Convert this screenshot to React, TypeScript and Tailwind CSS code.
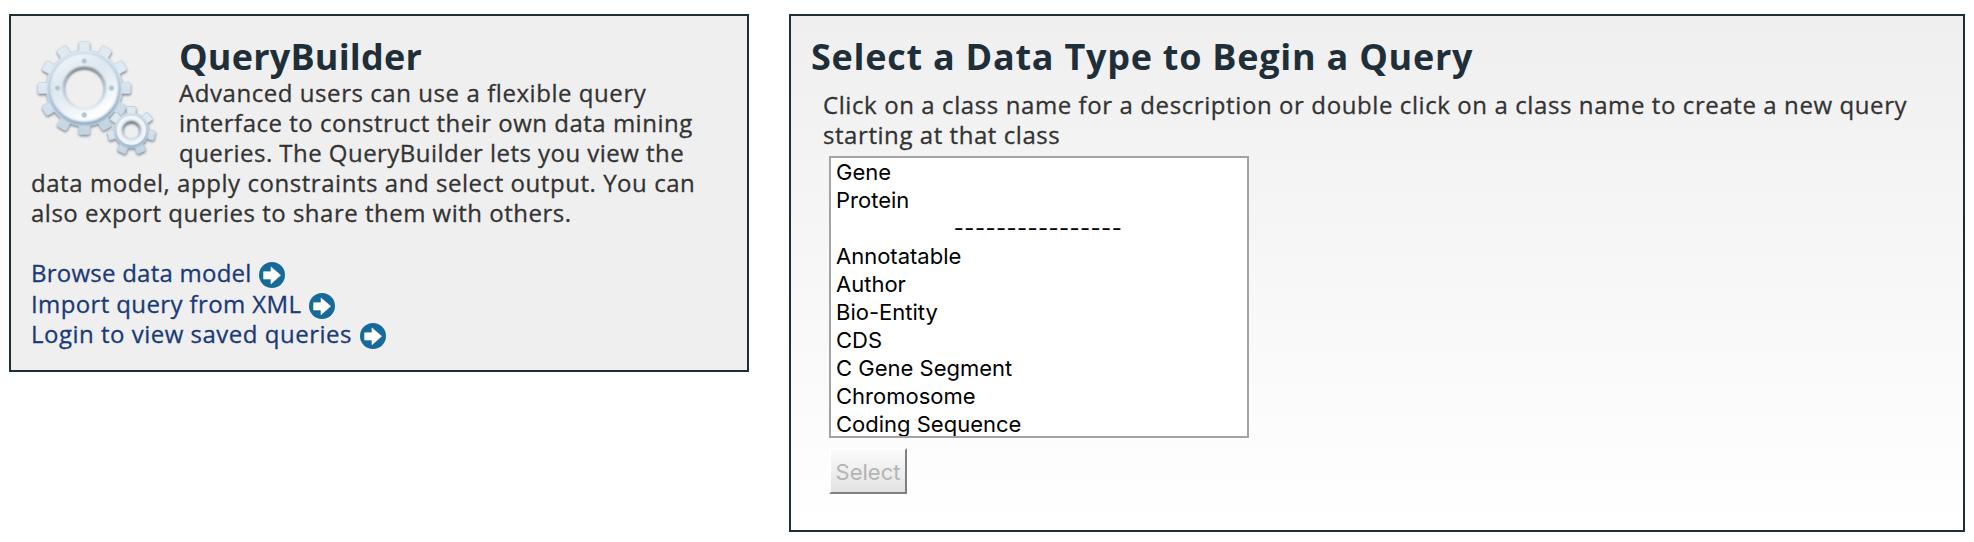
import React from "react";

function gearPath(cx: number, cy: number, teeth: number, outer: number, root: number, hole: number, start = -90) {
  const step = 360 / teeth;
  const pt = (r: number, deg: number) => {
    const a = (deg * Math.PI) / 180;
    return `${(cx + r * Math.cos(a)).toFixed(2)} ${(cy + r * Math.sin(a)).toFixed(2)}`;
  };
  let d = "";
  for (let i = 0; i < teeth; i++) {
    const c = start + i * step;
    d += `${i === 0 ? "M" : "L"}${pt(root, c - step * 0.27)} L${pt(outer - 1, c - step * 0.23)} L${pt(outer, c - step * 0.17)} L${pt(outer, c + step * 0.17)} L${pt(outer - 1, c + step * 0.23)} L${pt(root, c + step * 0.27)} A${root} ${root} 0 0 1 ${pt(root, c + step * 0.73)} `;
  }
  d += `Z M${cx + hole} ${cy} A${hole} ${hole} 0 1 0 ${cx - hole} ${cy} A${hole} ${hole} 0 1 0 ${cx + hole} ${cy} Z`;
  return d;
}

function Gears() {
  return (
    <svg className="block h-[130px] w-[140px]" viewBox="0 0 140 130" aria-hidden="true">
      <defs>
        <linearGradient id="metal" x1="0" y1="0" x2="0.15" y2="1">
          <stop offset="0" stopColor="#dfe9f0" />
          <stop offset="0.45" stopColor="#dfeaf3" />
          <stop offset="1" stopColor="#c3d5e3" />
        </linearGradient>
        <linearGradient id="face" x1="0.1" y1="0" x2="0.6" y2="1">
          <stop offset="0" stopColor="#eef3f7" />
          <stop offset="0.35" stopColor="#dce7f0" />
          <stop offset="0.7" stopColor="#e9f0f6" />
          <stop offset="1" stopColor="#fbfcfd" />
        </linearGradient>
        <linearGradient id="bore" x1="0" y1="0" x2="0" y2="1">
          <stop offset="0" stopColor="#66727c" />
          <stop offset="0.5" stopColor="#a9b8c4" />
          <stop offset="1" stopColor="#dbe4eb" />
        </linearGradient>
        <linearGradient id="rim" x1="0" y1="0" x2="0.2" y2="1">
          <stop offset="0" stopColor="#cfdde8" />
          <stop offset="1" stopColor="#94afc4" />
        </linearGradient>
        <filter id="drop" x="-20%" y="-20%" width="140%" height="140%">
          <feDropShadow dx="0.2" dy="1.7" stdDeviation="0.9" floodColor="#5c6c7b" floodOpacity="0.75" />
        </filter>
        <filter id="soft" x="-20%" y="-20%" width="140%" height="140%">
          <feGaussianBlur stdDeviation="0.9" />
        </filter>
      </defs>
      <g filter="url(#drop)">
        <path d={gearPath(59.3, 53, 12, 46.5, 38, 20.5)} fill="url(#metal)" fillRule="evenodd" stroke="#c9d6e0" strokeWidth="0.7" />
      </g>
      <circle cx="59.3" cy="53.5" r="34.8" fill="none" stroke="url(#rim)" strokeWidth="3.6" filter="url(#soft)" />
      <circle cx="59.3" cy="52.7" r="27" fill="none" stroke="url(#face)" strokeWidth="13.5" filter="url(#soft)" />
      <circle cx="59.3" cy="53.3" r="20.6" fill="none" stroke="url(#bore)" strokeWidth="1.9" filter="url(#soft)" />
      <g fill="#b3c5d2" stroke="#cfdde7" strokeWidth="0.8">
        <circle cx="59.3" cy="26" r="2.6" />
        <circle cx="59.3" cy="80" r="2.6" />
        <circle cx="32.5" cy="53" r="2.6" />
        <circle cx="86.5" cy="53" r="2.6" />
      </g>
      <g filter="url(#drop)">
        <path d={gearPath(106.4, 95.5, 7, 24.2, 17.5, 8.8)} fill="url(#metal)" fillRule="evenodd" stroke="#b9cad7" strokeWidth="0.7" />
      </g>
      <circle cx="106.4" cy="95.7" r="16" fill="none" stroke="url(#rim)" strokeWidth="2.4" filter="url(#soft)" />
      <circle cx="106.4" cy="95.3" r="12" fill="none" stroke="#f1f5f9" strokeWidth="5" />
      <circle cx="106.4" cy="95.7" r="9" fill="none" stroke="url(#bore)" strokeWidth="1.9" filter="url(#soft)" />
    </svg>
  );
}

function ArrowIcon() {
  return (
    <svg className="mt-[4px] h-[26px] w-[26px] shrink-0" viewBox="0 0 26 26" aria-hidden="true">
      <circle cx="13" cy="13" r="13" fill="#156a97" />
      <path d="M4.6 9.7H12V4.9L21.6 13.2L12 21.8V17H4.6Z" fill="#fff" stroke="#fff" strokeWidth="0.6" strokeLinejoin="round" />
    </svg>
  );
}

const options = ["Gene", "Protein", "----------------", "Annotatable", "Author", "Bio-Entity", "CDS", "C Gene Segment", "Chromosome", "Coding Sequence"];

export default function App() {
  return (
    <main className="flex h-[542px] w-[1974px] items-start gap-[40px] overflow-hidden bg-white pt-[14px] pl-[9px] font-['Open_Sans','Noto_Sans',sans-serif] text-[24px] leading-[30px] text-[#333333]">
      <section className="h-[358px] w-[740px] shrink-0 border-2 border-[#1f2f3a] bg-[#efefef] pl-5">
        <div className="flex h-[134px]">
          <div className="-ml-[6px] w-[154px] shrink-0 pt-[19px]">
            <Gears />
          </div>
          <div className="pt-[20px] whitespace-nowrap">
            <h1 className="h-[42px] text-[36px] leading-[41px] font-bold tracking-[0.2px] text-[#1f2f3a]">QueryBuilder</h1>
            <div className="[-webkit-text-stroke:0.3px]">
              <p className="tracking-[0.56px]">Advanced users can use a flexible query</p>
              <p className="tracking-[0.5px]">interface to construct their own data mining</p>
              <p className="tracking-[0.46px]">queries. The QueryBuilder lets you view the</p>
            </div>
          </div>
        </div>
        <div className="pt-[18px] whitespace-nowrap [-webkit-text-stroke:0.3px]">
          <p className="tracking-[0.55px]">data model, apply constraints and select output. You can</p>
          <p className="tracking-[0.5px]">also export queries to share them with others.</p>
        </div>
        <nav className="flex flex-col pt-[30px] whitespace-nowrap text-[#1a3a78] [-webkit-text-stroke:0.3px]">
          <a className="flex h-[31px] items-start gap-[8px]"><span className="w-[220px] tracking-[0.24px]">Browse data model</span><ArrowIcon /></a>
          <a className="flex h-[30px] items-start gap-[8px]"><span className="w-[270px] tracking-[0.38px]">Import query from XML</span><ArrowIcon /></a>
          <a className="flex h-[30px] items-start gap-[8px]"><span className="w-[321px] tracking-[0.5px]">Login to view saved queries</span><ArrowIcon /></a>
        </nav>
      </section>

      <section className="h-[518px] w-[1176px] shrink-0 border-2 border-[#1f2f3a] bg-linear-to-b from-[#efefef] to-white pt-[20px] pl-5 whitespace-nowrap">
        <h2 className="h-[42px] text-[36px] leading-[41px] font-bold tracking-[0.74px] text-[#1f2f3a]">Select a Data Type to Begin a Query</h2>
        <div className="pt-[12px] pl-[12px] [-webkit-text-stroke:0.3px]">
          <p className="tracking-[0.595px]">Click on a class name for a description or double click on a class name to create a new query</p>
          <p className="tracking-[0.56px]">starting at that class</p>
        </div>
        <div className="pt-[6px] pl-[18px] font-['Inter',sans-serif]">
          <ul className="h-[282px] w-[420px] overflow-hidden border-2 border-[#a3a3a3] bg-white pl-[5px] text-[22px] leading-[28px] text-black">
            {options.map((o) => (
              <li key={o} className={o.startsWith("-") ? "pr-[7px] text-center tracking-[0.4px]" : ""}>{o}</li>
            ))}
          </ul>
          <button disabled className="mt-[10px] block h-[46px] w-[78px] border-2 border-t-white border-r-[#808080] border-b-[#808080] border-l-white bg-linear-to-b from-[#fbfbfb] to-[#e2e2e2] text-center text-[22px] leading-[44px] text-[#b4b4b4]">
            Select
          </button>
        </div>
      </section>
    </main>
  );
}
